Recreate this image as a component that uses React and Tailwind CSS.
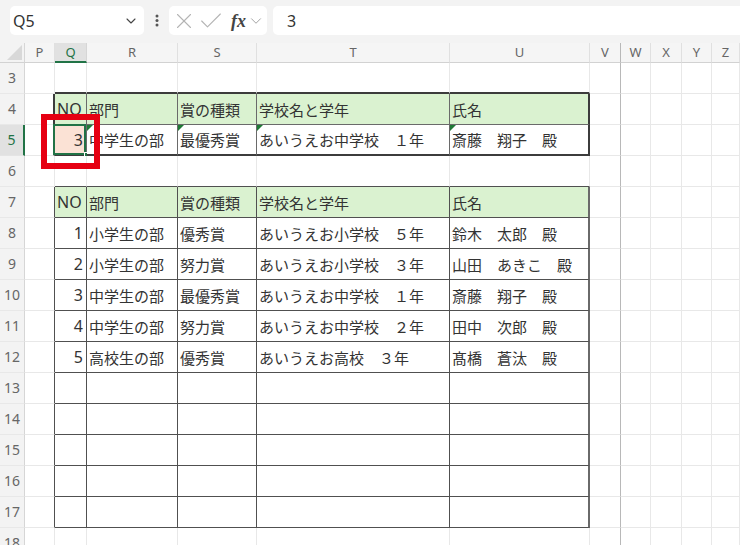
import React from 'react';
import { X, Check, ChevronDown } from 'lucide-react';

const COLS = ['P', 'Q', 'R', 'S', 'T', 'U', 'V', 'W', 'X', 'Y', 'Z'];
const HEAD = ['NO', '部門', '賞の種類', '学校名と学年', '氏名'];

const DATA = {
  4: HEAD,
  5: ['3', '中学生の部', '最優秀賞', 'あいうえお中学校　１年', '斎藤　翔子　殿'],
  7: HEAD,
  8: ['1', '小学生の部', '優秀賞', 'あいうえお小学校　５年', '鈴木　太郎　殿'],
  9: ['2', '小学生の部', '努力賞', 'あいうえお小学校　３年', '山田　あきこ　殿'],
  10: ['3', '中学生の部', '最優秀賞', 'あいうえお中学校　１年', '斎藤　翔子　殿'],
  11: ['4', '中学生の部', '努力賞', 'あいうえお中学校　２年', '田中　次郎　殿'],
  12: ['5', '高校生の部', '優秀賞', 'あいうえお高校　３年', '髙橋　蒼汰　殿'],
};

const ROWS = [3, 4, 5, 6, 7, 8, 9, 10, 11, 12, 13, 14, 15, 16, 17, 18];

function cellClasses(r, c) {
  const inCols = c >= 1 && c <= 5;
  const t1 = (r === 4 || r === 5) && inCols;
  const t2 = r >= 7 && r <= 17 && inCols;
  let br;
  if (c === 0 && (r === 4 || r === 5)) br = 'border-r-2 border-r-[#3c3c3c]';
  else if (c === 0 && r >= 7 && r <= 17) br = 'border-r border-r-[#505050]';
  else if (t1 && c === 5) br = 'border-r-2 border-r-[#3c3c3c]';
  else if (t1) br = 'border-r border-r-[#6a6a6a]';
  else if (t2 && c === 5) br = 'border-r-2 border-r-[#6a6a6a]';
  else if (t2) br = 'border-r border-r-[#505050]';
  else if (c === 6) br = 'border-r border-r-[#b8b8b8]';
  else br = 'border-r border-r-[#e8e8e8]';

  let bb;
  if (r === 3 && inCols) bb = 'border-b-2 border-b-[#3c3c3c]';
  else if (r === 4 && t1) bb = 'border-b border-b-[#6a6a6a]';
  else if (r === 5 && t1) bb = 'border-b-2 border-b-[#3c3c3c]';
  else if (r === 6 && inCols) bb = 'border-b border-b-[#505050]';
  else if (t2) bb = 'border-b border-b-[#505050]';
  else bb = 'border-b border-b-[#e8e8e8]';

  let bg = 'bg-white';
  if ((r === 4 || r === 7) && inCols) bg = 'bg-[#daf2d0]';
  if (r === 5 && c === 1) bg = 'bg-[#fbe2d5]';
  return `${br} ${bb} ${bg}`;
}

function Tri() {
  return (
    <svg className="absolute left-0 top-0" width="6" height="6" viewBox="0 0 6 6">
      <polygon points="0,0 6,0 0,6" fill="#1f7a36" />
    </svg>
  );
}

function Cell({ r, c }) {
  const vals = DATA[r];
  const v = vals && c >= 1 && c <= 5 ? vals[c - 1] : null;
  const isNum = c === 1 && v && /^[0-9]$/.test(v);
  const isQ5 = r === 5 && c === 1;
  const tri = r === 5 && c >= 2 && c <= 5;
  return (
    <div className={`relative h-[31px] flex items-center ${cellClasses(r, c)} ${isNum ? 'justify-end pr-[3px]' : 'justify-start pl-[2px]'}`}>
      {v && (
        <span className={`whitespace-nowrap text-[15px] leading-none text-[#333] ${isNum || v === 'NO' ? "font-['Noto_Sans',sans-serif] text-[16px]" : "font-['Noto_Sans_CJK_JP',sans-serif]"}`}>
          {v}
        </span>
      )}
      {tri && <Tri />}
      {isQ5 && (
        <>
          <div className="absolute left-[-2px] top-[-1px] right-0 bottom-[-1px] border-2 border-[#217346]" />
          <div className="absolute right-[-4px] bottom-[-4px] w-[6px] h-[6px] bg-[#217346] border border-white" />
          <div className="absolute left-[-14px] top-[-11px] w-[59px] h-[55px] border-[6px] border-[#e60012] z-10" />
        </>
      )}
    </div>
  );
}

export default function App() {
  return (
    <div className="w-[740px] h-[545px] overflow-hidden bg-white font-['Noto_Sans',sans-serif]">
      {/* top bar */}
      <div className="h-[43px] bg-[#f3f3f3] flex items-start pt-[6px] pl-[10px]">
        <div className="w-[134px] h-[29px] bg-white rounded-[5px] flex items-center justify-between pl-[3px] pr-[5px]">
          <span className="text-[16px] text-[#333] leading-none">Q5</span>
          <ChevronDown size={16} strokeWidth={1.6} color="#444" />
        </div>
        <div className="w-[25px] h-[29px] flex items-center justify-center">
          <svg width="4" height="13" viewBox="0 0 4 13">
            <circle cx="2" cy="2" r="1.5" fill="#555" />
            <circle cx="2" cy="6.5" r="1.5" fill="#555" />
            <circle cx="2" cy="11" r="1.5" fill="#555" />
          </svg>
        </div>
        <div className="w-[98px] h-[29px] bg-white rounded-[5px] flex items-center pl-[2px]">
          <X size={26} strokeWidth={1} color="#b4b4b4" />
          <Check size={28} strokeWidth={0.95} color="#b4b4b4" />
          <span className="ml-[6px] font-['Liberation_Serif',serif] italic font-bold text-[18px] text-[#444] leading-none">fx</span>
          <ChevronDown size={18} strokeWidth={1.2} color="#999" className="ml-[1px]" />
        </div>
        <div className="flex-1 h-[29px] bg-white rounded-l-[5px] ml-[6px] flex items-center pl-[14px]">
          <span className="text-[16px] text-[#333] leading-none">3</span>
        </div>
      </div>

      {/* sheet */}
      <div className="grid grid-cols-[25px_30px_32px_91px_79px_193px_140px_31px_30px_31px_30px_28px]">
        <div className="relative h-[20px] bg-[#f3f3f3] border-r border-r-[#d6d6d6] border-b border-b-[#d2d2d2]">
          <svg className="absolute right-[2px] bottom-[2px]" width="15" height="15" viewBox="0 0 15 15">
            <polygon points="15,0 15,15 0,15" fill="#d8d8d8" />
          </svg>
        </div>
        {COLS.map((l, i) => (
          <div
            key={l}
            className={`h-[20px] flex items-center justify-center text-[13px] leading-none ${
              i === 1
                ? 'bg-[#e1e1e1] text-[#217346] border-b-2 border-b-[#217346] border-r border-r-[#d6d6d6]'
                : i === 6
                ? 'bg-[#f5f5f5] text-[#666] border-b border-b-[#d2d2d2] border-r border-r-[#b8b8b8]'
                : 'bg-[#f5f5f5] text-[#666] border-b border-b-[#d2d2d2] border-r border-r-[#e0e0e0]'
            }`}
          >
            {l}
          </div>
        ))}

        {ROWS.map((r) => (
          <React.Fragment key={r}>
            <div
              className={`h-[31px] flex items-center justify-center text-[14px] leading-none ${
                r === 5
                  ? 'bg-[#e1e1e1] text-[#217346] border-r-2 border-r-[#217346] border-b border-b-[#e4e4e4]'
                  : 'bg-[#f3f3f3] text-[#666] border-r border-r-[#d6d6d6] border-b border-b-[#e8e8e8]'
              }`}
            >
              {r}
            </div>
            {COLS.map((l, c) => (
              <Cell key={l} r={r} c={c} />
            ))}
          </React.Fragment>
        ))}
      </div>
    </div>
  );
}
